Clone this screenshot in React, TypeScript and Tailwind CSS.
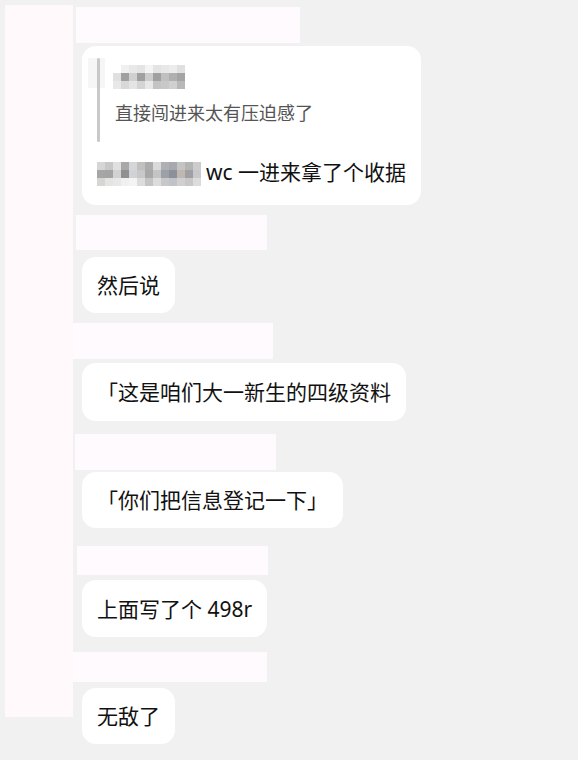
import React from 'react'

const font = { fontFamily: '"Noto Sans", "Noto Sans CJK SC", sans-serif' }

// pixelated (redacted) cells, one row per array
const nameMosaic = [
  ['#ffffff', '#f0f0f0', '#e8e8e8', '#e4e4e4', '#f4f4f4', '#e4e4e4', '#e8e8e8', '#ececec', '#e0e0e0'],
  ['#e0e0e0', '#a0a0a0', '#d0d0d0', '#a0a0a0', '#cccccc', '#a0a0a0', '#c0c0c0', '#b0b0b0', '#a4a4a4'],
  ['#e8e8e8', '#d8d8d8', '#e4e4e4', '#d4d4d4', '#e8e8e8', '#c4c4c4', '#c8c8c8', '#d0d0d0', '#b8b8b8'],
]

const senderMosaic = [
  ['#d6d6d6', '#c8c8c8', '#e0e0e0', '#a8a8a8', '#d4d6d8', '#c0c0c0', '#acacac', '#dcdad8', '#b0b0b4', '#a8a8b0', '#c4c4c4', '#b4b4b4', '#cccccc'],
  ['#a8a6a4', '#a4a4a4', '#d0d2d4', '#909090', '#d0d2d6', '#c8c8c8', '#a8a8a8', '#c4c4c4', '#9ca0a8', '#8c9098', '#c0b8b0', '#a0a0a4', '#c8c8cc'],
  ['#d8d6d4', '#e4e4e4', '#e8e8e8', '#f0f0f0', '#f4f4f4', '#dcdcdc', '#c4c4c4', '#dcdcdc', '#c8c8c8', '#c0c4c8', '#d0d0d0', '#c8c8c8', '#dcdcdc'],
]

function Mosaic({ rows, cell, rowH }: { rows: string[][]; cell: number; rowH: number }) {
  return (
    <div className="flex flex-col shrink-0">
      {rows.map((r, i) => (
        <div key={i} className="flex">
          {r.map((c, j) => (
            <div key={j} style={{ width: cell, height: rowH, background: c }} />
          ))}
        </div>
      ))}
    </div>
  )
}

function Strip({ w, h, ml, mt }: { w: string; h: string; ml: string; mt: string }) {
  return <div className={`bg-[#fefafd] ${w} ${h} ${ml} ${mt}`} />
}

function Bubble({ text, mt, h }: { text: string; mt: string; h: string }) {
  return (
    <div className={`ml-[6px] ${mt} ${h} w-fit flex items-center px-[15px] rounded-[14px] bg-white text-[21px] leading-[28px] text-[#111] whitespace-nowrap`}>
      {text}
    </div>
  )
}

export default function App() {
  return (
    <div className="w-[578px] h-[760px] bg-[#f1f1f1] flex overflow-hidden" style={font}>
      {/* left avatar column */}
      <div className="ml-[5px] mt-[5px] w-[68px] h-[712px] bg-[#fff9fc] shrink-0" />

      <div className="flex flex-col ml-[3px]">
        <Strip w="w-[224px]" h="h-[36px]" ml="ml-0" mt="mt-[7px]" />

        {/* quoted reply */}
        <div className="ml-[6px] mt-[3px] w-fit rounded-[14px] bg-white px-[15px] pt-[12px] pb-[19px]">
          <div className="flex relative">
            <div className="absolute -left-[9px] top-0 w-[17px] h-[30px] bg-[#f6f6f6]" />
            <div className="w-[3px] rounded-full bg-[#c9c9c9] relative" />
            <div className="flex flex-col pl-[13px] pt-[7px] pb-[16px]">
              <Mosaic rows={nameMosaic} cell={8} rowH={8} />
              <div className="mt-[11px] ml-[2px] text-[18px] leading-[26px] text-[#555] whitespace-nowrap">直接闯进来太有压迫感了</div>
            </div>
          </div>
          <div className="mt-[16px] flex items-center h-[28px] whitespace-nowrap">
            <div className="mt-[3px]">
              <Mosaic rows={senderMosaic} cell={8} rowH={8} />
            </div>
            <span className="ml-[5px] text-[21px] leading-[28px] text-[#111]">wc 一进来拿了个收据</span>
          </div>
        </div>

        <Strip w="w-[191px]" h="h-[35px]" ml="ml-0" mt="mt-[10px]" />
        <Bubble text="然后说" mt="mt-[7px]" h="h-[56px]" />

        <Strip w="w-[200px]" h="h-[36px]" ml="-ml-[3px]" mt="mt-[10px]" />
        <Bubble text="「这是咱们大一新生的四级资料" mt="mt-[4px]" h="h-[58px]" />

        <Strip w="w-[201px]" h="h-[36px]" ml="-ml-[1px]" mt="mt-[13px]" />
        <Bubble text="「你们把信息登记一下」" mt="mt-[2px]" h="h-[56px]" />

        <Strip w="w-[191px]" h="h-[29px]" ml="ml-[1px]" mt="mt-[18px]" />
        <Bubble text="上面写了个 498r" mt="mt-[5px]" h="h-[57px]" />

        <Strip w="w-[194px]" h="h-[30px]" ml="-ml-[3px]" mt="mt-[15px]" />
        <Bubble text="无敌了" mt="mt-[6px]" h="h-[56px]" />
      </div>
    </div>
  )
}
